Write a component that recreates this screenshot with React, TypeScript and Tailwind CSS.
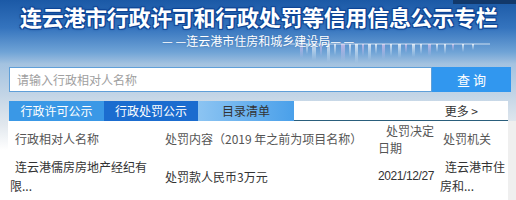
import React from "react";

const Skyline = () => (
  <svg className="absolute left-0 top-0" width="516" height="64" viewBox="0 0 516 64">
    <defs>
      <linearGradient id="streak" x1="0" y1="0" x2="0" y2="1">
        <stop offset="0" stopColor="#ffffff" stopOpacity="0.75" />
        <stop offset="1" stopColor="#ffffff" stopOpacity="0" />
      </linearGradient>
      <linearGradient id="pink" x1="0" y1="0" x2="0" y2="1">
        <stop offset="0" stopColor="#e8c8f0" stopOpacity="0.7" />
        <stop offset="1" stopColor="#e8c8f0" stopOpacity="0" />
      </linearGradient>
    </defs>
    {[
      [300, 3, 14], [306, 2, 10], [312, 4, 16], [320, 2, 12], [327, 3, 18], [334, 2, 11],
      [341, 4, 17], [349, 2, 13], [355, 3, 19], [362, 2, 12], [368, 3, 16], [375, 2, 10],
      [382, 3, 15], [390, 2, 12], [398, 3, 14], [405, 2, 9], [412, 3, 13], [420, 2, 10],
      [428, 3, 12], [436, 2, 8], [444, 2, 10], [452, 2, 7], [462, 2, 8], [472, 2, 6],
    ].map(([x, w, h], i) => (
      <rect key={i} x={x} y={44} width={w} height={h} fill={i % 3 === 0 ? "url(#pink)" : "url(#streak)"} />
    ))}
    <rect x="290" y="43" width="200" height="2" fill="#ffffff" opacity="0.35" />
  </svg>
);

export default function App() {
  return (
    <div className="relative w-[516px] h-[200px] overflow-hidden font-['Noto_Sans_CJK_SC',sans-serif] bg-[linear-gradient(to_bottom,#1b59a6_0px,#3574be_28px,#6fa3d6_52px,#a3c2e0_64px,#c3d5e6_95px,#e2e8ee_125px,#ffffff_150px)]">
      {/* Header */}
      <div className="relative h-[60px]">
        <Skyline />
        <div className="absolute left-[453px] top-0 w-[63px] h-[4px] bg-[#12386a]" />
        <div className="relative pl-[20px] pt-[1px] text-[22px] leading-[30px] font-bold tracking-[-0.3px] text-white whitespace-nowrap [text-shadow:1px_1px_0_#0d4597,-1px_-1px_0_#0d4597,1px_-1px_0_#0d4597,-1px_1px_0_#0d4597,0_0_3px_#0a3a80]">
          连云港市行政许可和行政处罚等信用信息公示专栏
        </div>
        <div className="relative pl-[162px] mt-[2px] text-[12px] leading-[16px] text-white whitespace-nowrap [text-shadow:0_0_2px_#3a70b0]">
          — —连云港市住房和城乡建设局— —
        </div>
      </div>

      {/* Search */}
      <div className="flex pl-[9px] pr-[5px] mt-[7px] h-[25px]">
        <div className="flex-1 bg-white border border-[#5f9fd8] flex items-center pl-[7px] text-[12px] text-[#a0a0a0]">
          请输入行政相对人名称
        </div>
        <div className="w-[79px] bg-[#3197ef] flex items-center justify-center text-white text-[13px] tracking-[3px] pl-[3px]">
          查询
        </div>
      </div>

      {/* Tabs */}
      <div className="flex ml-[9px] mr-[8px] mt-[9px] h-[20px] text-[12px]">
        <div className="w-[95px] bg-[#3a98e6] text-white flex items-center justify-center">行政许可公示</div>
        <div className="w-[94px] bg-[#1b6ccf] text-white flex items-center justify-center">行政处罚公示</div>
        <div className="w-[96px] bg-[linear-gradient(to_right,#8cc4f2,#4aa0ea)] text-[#333] flex items-center justify-center">目录清单</div>
        <div className="flex-1 bg-white flex items-center justify-end pr-[30px] text-[#333] border-b border-[#2a5e7c]">更多 &gt;</div>
      </div>

      {/* Table */}
      <div className="flex">
        <div className="w-[8px]" />
        <div className="w-[500px] bg-white text-[12px] text-[#555]">
          <div className="grid grid-cols-[150px_218px_62px_70px] items-center h-[35px] leading-[17px]">
            <div className="pl-[7px] whitespace-nowrap">行政相对人名称</div>
            <div className="pl-[7px] whitespace-nowrap">处罚内容（2019 年之前为项目名称）</div>
            <div className="pl-[2px] indent-[8px]">处罚决定日期</div>
            <div className="pl-[5px] whitespace-nowrap">处罚机关</div>
          </div>
          <div className="grid grid-cols-[150px_218px_62px_70px] items-center py-[1px] leading-[19px] text-[#333]">
            <div className="pl-[2px] pr-[4px] indent-[5px] break-all">连云港儒房房地产经纪有限...</div>
            <div className="pl-[7px] whitespace-nowrap">处罚款人民币3万元</div>
            <div className="pl-[2px] whitespace-nowrap tracking-[-0.4px] font-['Liberation_Sans',sans-serif]">2021/12/27</div>
            <div className="pl-[2px] pr-[2px] indent-[5px] break-all">连云港市住房和...</div>
          </div>
          <div className="grid grid-cols-[150px_218px_62px_70px] items-center py-[1px] leading-[19px] text-[#333]">
            <div className="pl-[2px] pr-[4px] indent-[5px] break-all">连云港市房屋安全鉴定有限...</div>
            <div className="pl-[7px] whitespace-nowrap">处罚款人民币1万元</div>
            <div className="pl-[2px] whitespace-nowrap tracking-[-0.4px] font-['Liberation_Sans',sans-serif]">2021/12/20</div>
            <div className="pl-[2px] pr-[2px] indent-[5px] break-all">连云港市住房和...</div>
          </div>
        </div>
        <div className="w-[8px] bg-[#efefef]" />
      </div>
    </div>
  );
}
